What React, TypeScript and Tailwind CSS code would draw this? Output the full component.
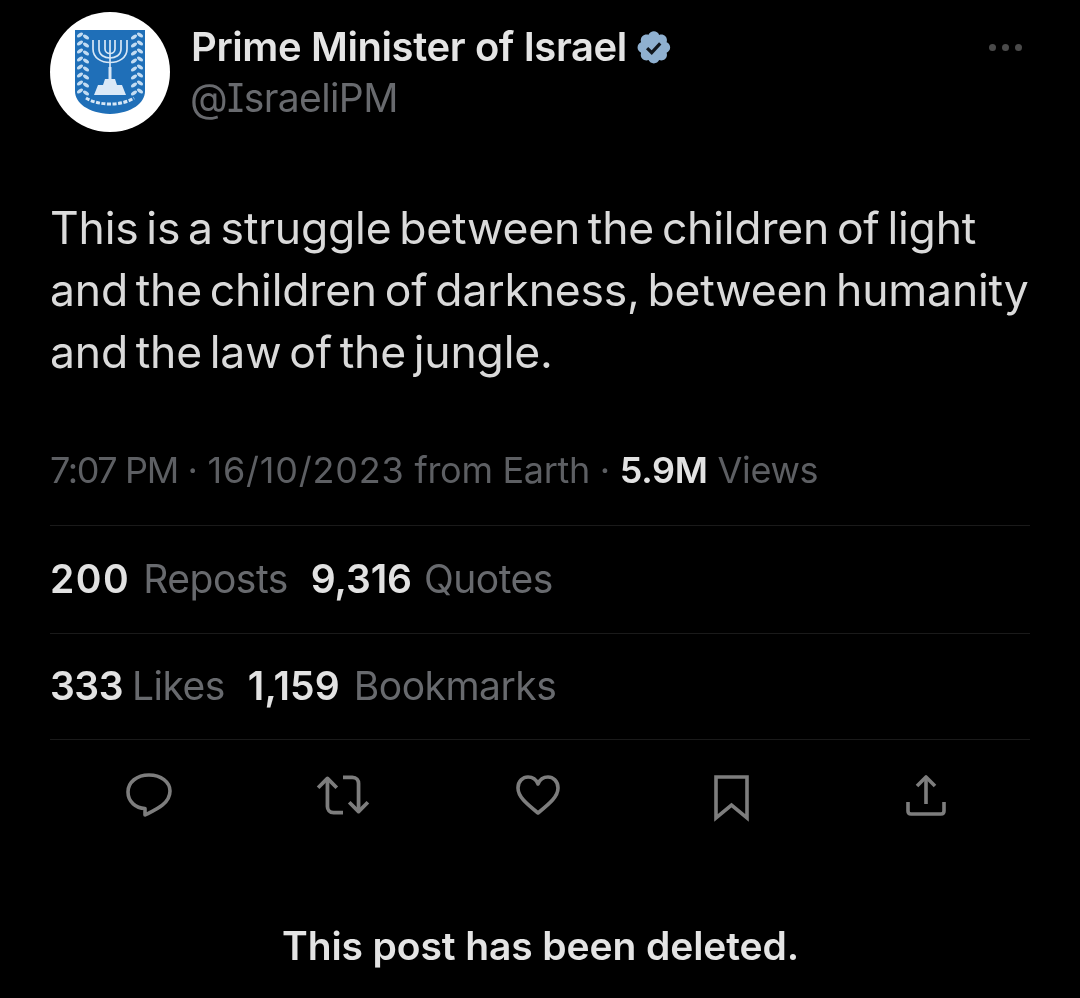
import React from 'react';

const leafRows = [6, 14, 22, 30, 38, 46, 54, 62];

function Emblem() {
  return (
    <svg width="72" height="86" viewBox="0 0 72 86">
      <path d="M1 1H71V62C71 74 58 84 36 85C14 84 1 74 1 62Z" fill="#1f6fb8" />
      <g stroke="#d7e7f6" fill="none" strokeWidth="1.7">
        {/* menorah arms */}
        <path d="M36 11V40" />
        <path d="M31 11V20C31 26 41 26 41 20V11" />
        <path d="M25 11V20C25 32 47 32 47 20V11" />
        <path d="M19 11V20C19 38 53 38 53 20V11" />
        <path d="M36 38V52" strokeWidth="3" />
      </g>
      <path d="M31 50H41L43 56H48L52 66H20L24 56H29Z" fill="#dbe9f7" />
      {/* olive branches */}
      {leafRows.map((y) => (
        <g key={y} fill="#c3dcf2">
          <ellipse cx="6" cy={y} rx="3.4" ry="1.7" transform={`rotate(-35 6 ${y})`} />
          <ellipse cx="12" cy={y + 2} rx="3.4" ry="1.7" transform={`rotate(35 12 ${y + 2})`} />
          <ellipse cx="66" cy={y} rx="3.4" ry="1.7" transform={`rotate(35 66 ${y})`} />
          <ellipse cx="60" cy={y + 2} rx="3.4" ry="1.7" transform={`rotate(-35 60 ${y + 2})`} />
        </g>
      ))}
      <path d="M12 69C24 77 48 77 60 69" stroke="#d7e7f6" strokeWidth="3" strokeDasharray="4 1.5" fill="none" />
    </svg>
  );
}

function VerifiedBadge() {
  return (
    <svg width="39" height="39" viewBox="0 0 22 22">
      <path
        d="M20.4 11c0-1.300-.8-2.400-2-2.900.4-1.200.2-2.600-.7-3.500-.9-.9-2.300-1.100-3.500-.7C13.700 2.700 12.500 1.900 11.200 1.900s-2.500.8-3 1.900C7 3.400 5.600 3.700 4.700 4.600c-.9.9-1.100 2.300-.7 3.500C2.800 8.600 2 9.700 2 11s.8 2.400 2 2.900c-.4 1.200-.2 2.600.7 3.500.9.900 2.300 1.100 3.500.7.500 1.100 1.700 1.900 3 1.900s2.500-.8 3-1.900c1.200.4 2.600.2 3.500-.7.9-.9 1.100-2.300.7-3.500 1.200-.5 2-1.600 2-2.900Z"
        fill="#8fb0d0"
      />
      <path d="M7.400 11.300l2.600 2.600 4.800-5.200" fill="none" stroke="#10151c" strokeWidth="1.800" />
    </svg>
  );
}

function Stat({ value, label, gap, valueTrack }: { value: string; label: string; gap: string; valueTrack: string }) {
  return (
    <span className={`flex items-baseline ${gap} tracking-[-0.5px]`}>
      <span className={`font-semibold text-[#e2e2e2] ${valueTrack}`}>{value}</span>
      <span className="text-[#686a6e]">{label}</span>
    </span>
  );
}

function ActionSlot({ children }: { children: React.ReactNode }) {
  return <div className="w-[50px] h-[50px] flex items-center justify-center">{children}</div>;
}

function App() {
  return (
    <div className='w-[1080px] h-[998px] overflow-hidden bg-black font-["Inter","Liberation_Sans",sans-serif]'>
      <div className="px-[50px] pt-[12px] blur-[0.6px]">
        {/* header */}
        <div className="flex items-start">
          <div className="w-[120px] h-[120px] rounded-full bg-white flex items-center justify-center shrink-0">
            <Emblem />
          </div>
          <div className="ml-[21px] pt-[11px] flex-1">
            <div className="flex items-center h-[48px]">
              <span className="text-[40px] font-semibold text-[#e4e4e4] tracking-[-0.4px] whitespace-nowrap">Prime Minister of Israel</span>
              <span className="ml-[7px]"><VerifiedBadge /></span>
            </div>
            <div className='text-[39px] leading-[54px] text-[#686a6e] tracking-[-0.6px] -ml-[1px] [font-feature-settings:"cv08"]'>@IsraeliPM</div>
          </div>
          <div className="flex gap-[6px] pt-[32px] pr-[8px]">
            <span className="w-[7px] h-[7px] rounded-full bg-[#4a4a4a]" />
            <span className="w-[7px] h-[7px] rounded-full bg-[#4a4a4a]" />
            <span className="w-[7px] h-[7px] rounded-full bg-[#4a4a4a]" />
          </div>
        </div>

        {/* body */}
        <p className="mt-[65px] text-[44.5px] leading-[62px] text-[#dadada] tracking-[-0.2px] [word-spacing:-4.5px] whitespace-nowrap">
          This is a struggle between the children of light
          <br />
          and the children of darkness, between humanity
          <br />
          and the law of the jungle.
        </p>

        {/* meta */}
        <div className="mt-[65px] text-[36px] leading-[44px] text-[#5d5f63] tracking-[-0.3px] whitespace-nowrap">
          <span className="tracking-[-1.4px]">7:07 PM</span> · <span className="tracking-[0.8px]">16/10/2023</span> from Earth · <span className="font-semibold text-[#e2e2e2]">5.9M</span> Views
        </div>

        <div className="mt-[33px] border-t border-[#1a1a1a]" />
        <div className="h-[107px] flex items-center gap-[23px] text-[39px]">
          <Stat value="200" label="Reposts" gap="gap-[13px]" valueTrack="tracking-[1.5px]" />
          <Stat value="9,316" label="Quotes" gap="gap-[12px]" valueTrack="tracking-[-0.1px]" />
        </div>
        <div className="border-t border-[#1a1a1a]" />
        <div className="h-[105px] flex items-center gap-[23px] text-[39px]">
          <Stat value="333" label="Likes" gap="gap-[9px]" valueTrack="tracking-[-0.5px]" />
          <Stat value="1,159" label="Bookmarks" gap="gap-[14px]" valueTrack="tracking-[0.1px]" />
        </div>
        <div className="border-t border-[#1a1a1a]" />

        {/* actions */}
        <div className="mt-[30px] ml-[74px] mr-[79px] flex justify-between items-center text-[#7d7d7d]">
          <ActionSlot>
            <svg width="48" height="46" viewBox="0 0 48 46" fill="none" stroke="currentColor" strokeWidth="3.600">
              <path d="M24 3C12 3 3 10 3 20C3 30 11 36 20 36.500V43C30 38 45 32 45 19C45 10 36 3 24 3Z" strokeLinejoin="round" />
            </svg>
          </ActionSlot>
          <ActionSlot>
            <svg width="56" height="40" viewBox="0 0 54 38" fill="none" stroke="currentColor" strokeWidth="3.600" strokeLinejoin="round" className="shrink-0">
              <path d="M12 4V30C12 33 14 36 18 36H27" />
              <path d="M3 12L12 3L21 12" />
              <path d="M42 34V8C42 5 40 2 36 2H27" />
              <path d="M33 26L42 35L51 26" />
            </svg>
          </ActionSlot>
          <ActionSlot>
            <svg width="46" height="42" viewBox="0 0 46 42" fill="none" stroke="currentColor" strokeWidth="3.600" strokeLinejoin="round">
              <path d="M23 39C12 30 3 23 3 14C3 7 8 3 13 3C17 3 21 5 23 10C25 5 29 3 33 3C38 3 43 7 43 14C43 23 34 30 23 39Z" />
            </svg>
          </ActionSlot>
          <ActionSlot>
            <svg width="37" height="48" viewBox="0 0 37 48" fill="none" stroke="currentColor" strokeWidth="3.600" strokeLinejoin="miter" className="mt-[6px]">
              <path d="M3 3H34V44L18.500 31L3 44Z" />
            </svg>
          </ActionSlot>
          <ActionSlot>
            <svg width="42" height="44" viewBox="0 0 42 44" fill="none" stroke="currentColor" strokeWidth="3.600" strokeLinejoin="round">
              <path d="M21 4V31" />
              <path d="M12 13L21 4L30 13" />
              <path d="M3 29V38C3 40 4 41 6 41H36C38 41 39 40 39 38V29" />
            </svg>
          </ActionSlot>
        </div>

        <div className="mt-[102px] ml-[232px] text-[39px] leading-[48px] font-semibold text-[#e4e4e4] tracking-[-0.1px] whitespace-nowrap">
          This post has been deleted.
        </div>
      </div>
    </div>
  );
}

export default App;
